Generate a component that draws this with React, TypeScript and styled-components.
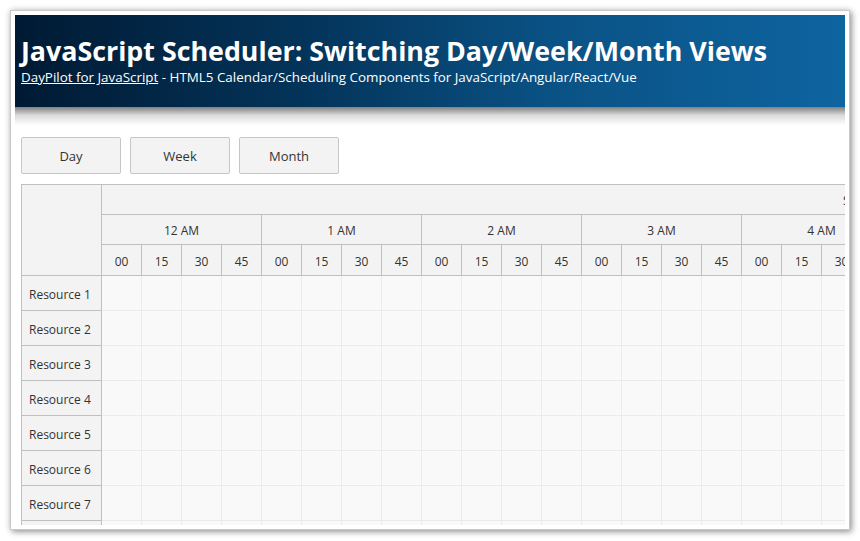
import React from "react";
import styled, { createGlobalStyle } from "styled-components";

const GlobalStyle = createGlobalStyle`
  *, *::before, *::after { box-sizing: border-box; }
  html, body { margin: 0; padding: 0; background: #fff; }
  body { font-family: "Open Sans", "Noto Sans", sans-serif; color: #333; }
`;

const Page = styled.div`
  width: 860px;
  height: 541px;
  padding: 10px;
`;

const Frame = styled.div`
  width: 840px;
  height: 520px;
  border: 1px solid #c9c9c9;
  padding: 4px;
  background: #fff;
  box-shadow: 2px 2px 6px rgba(0, 0, 0, 0.35), 0 0 7px rgba(0, 0, 0, 0.15);
`;

const Viewport = styled.div`
  width: 100%;
  height: 100%;
  overflow: hidden;
  display: flex;
  flex-direction: column;
`;

const Header = styled.header`
  position: relative;
  flex: none;
  height: 92px;
  padding: 19px 6px 0;
  color: #fff;
  background: linear-gradient(to right, #001a33 0%, #04345a 35%, #0a5285 65%, #0e64a0 100%);
  &::after {
    content: "";
    position: absolute;
    left: 0;
    right: 0;
    top: 100%;
    height: 18px;
    background: linear-gradient(to bottom, rgba(0, 0, 0, 0.5), rgba(0, 0, 0, 0.15) 45%, rgba(0, 0, 0, 0));
  }
`;

const Title = styled.h1`
  margin: 0;
  font-size: 26.8px;
  line-height: 34px;
  font-weight: 700;
  white-space: nowrap;
`;

const Subtitle = styled.div`
  font-size: 13.4px;
  line-height: 18px;
  white-space: nowrap;
`;

const Link = styled.a`
  color: #fff;
  text-decoration: underline;
`;

const Toolbar = styled.div`
  flex: none;
  display: flex;
  gap: 9px;
  padding: 30px 6px 10px;
`;

const Button = styled.button`
  width: 100px;
  height: 37px;
  border: 1px solid #c6c6c6;
  border-radius: 2px;
  background: #f3f3f3;
  color: #333;
  font-family: inherit;
  font-size: 13px;
  cursor: pointer;
`;

const SchedulerWrap = styled.div`
  flex: none;
  padding-left: 6px;
`;

const Grid = styled.div<{ $cols: number }>`
  display: grid;
  grid-template-columns: 80px repeat(${(p) => p.$cols}, 40px);
  grid-template-rows: 30px 30px 31px;
  grid-auto-rows: 35px;
  width: max-content;
  border-top: 1px solid #c0c0c0;
  border-left: 1px solid #c0c0c0;
  font-size: 12px;
  color: #333;
`;

const HeadBase = styled.div`
  display: flex;
  align-items: center;
  justify-content: center;
  padding-top: 2px;
  background: #f3f3f3;
  border-right: 1px solid #c0c0c0;
  border-bottom: 1px solid #c0c0c0;
  white-space: nowrap;
  overflow: hidden;
`;

const Corner = styled(HeadBase)`
  grid-column: 1;
  grid-row: 1 / span 3;
`;

const DateCell = styled(HeadBase)<{ $span: number; $offset: number }>`
  grid-row: 1;
  grid-column: 2 / span ${(p) => p.$span};
  justify-content: flex-start;
  padding-left: ${(p) => p.$offset}px;
`;

const HourCell = styled(HeadBase)`
  grid-row: 2;
  grid-column: span 4;
`;

const MinuteCell = styled(HeadBase)`
  grid-row: 3;
`;

const RowHeader = styled.div`
  grid-column: 1;
  display: flex;
  align-items: center;
  padding: 2px 0 0 7px;
  background: #f3f3f3;
  border-right: 1px solid #c0c0c0;
  border-bottom: 1px solid #c0c0c0;
  white-space: nowrap;
`;

const Cell = styled.div`
  background: #f9f9f9;
  border-right: 1px solid #ebebeb;
  border-bottom: 1px solid #ebebeb;
`;

const HOURS = ["12 AM", "1 AM", "2 AM", "3 AM", "4 AM", "5 AM"];
const MINUTES = ["00", "15", "30", "45"];
const RESOURCES = Array.from({ length: 9 }, (_, i) => `Resource ${i + 1}`);
const COLS = HOURS.length * 4;

export default function App() {
  return (
    <>
      <GlobalStyle />
      <Page>
        <Frame>
          <Viewport>
            <Header>
              <Title>JavaScript Scheduler: Switching Day/Week/Month Views</Title>
              <Subtitle>
                <Link href="#">DayPilot for JavaScript</Link> - HTML5 Calendar/Scheduling Components for
                JavaScript/Angular/React/Vue
              </Subtitle>
            </Header>
            <Toolbar>
              <Button>Day</Button>
              <Button>Week</Button>
              <Button>Month</Button>
            </Toolbar>
            <SchedulerWrap>
              <Grid $cols={COLS}>
                <Corner />
                <DateCell $span={COLS} $offset={741}>
                  Sunday, September 1, 2024
                </DateCell>
                {HOURS.map((h) => (
                  <HourCell key={h}>{h}</HourCell>
                ))}
                {HOURS.flatMap((h) =>
                  MINUTES.map((m) => <MinuteCell key={h + m}>{m}</MinuteCell>)
                )}
                {RESOURCES.map((r) => (
                  <React.Fragment key={r}>
                    <RowHeader>{r}</RowHeader>
                    {Array.from({ length: COLS }, (_, i) => (
                      <Cell key={i} />
                    ))}
                  </React.Fragment>
                ))}
              </Grid>
            </SchedulerWrap>
          </Viewport>
        </Frame>
      </Page>
    </>
  );
}
